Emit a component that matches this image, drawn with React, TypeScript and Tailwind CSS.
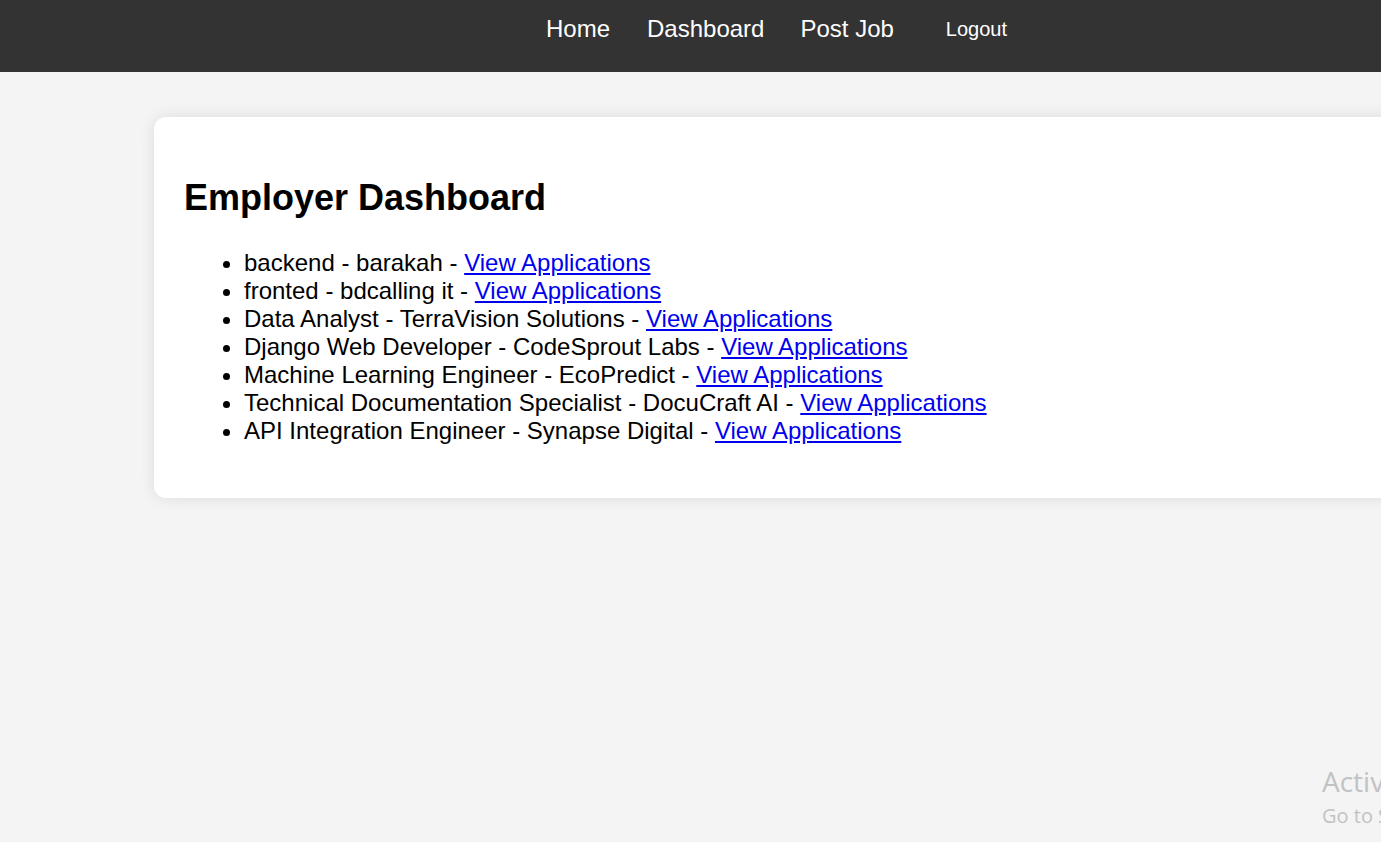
const jobs = [
  ['backend', 'barakah'],
  ['fronted', 'bdcalling it'],
  ['Data Analyst', 'TerraVision Solutions'],
  ['Django Web Developer', 'CodeSprout Labs'],
  ['Machine Learning Engineer', 'EcoPredict'],
  ['Technical Documentation Specialist', 'DocuCraft AI'],
  ['API Integration Engineer', 'Synapse Digital'],
];

export default function App() {
  return (
    <div className="relative h-[842px] w-full overflow-hidden bg-[#f4f4f4] font-['Liberation_Sans',Arial,sans-serif] text-black">
      {/* Top nav */}
      <nav className="flex h-[72px] items-start bg-[#333333] pl-[546px] pt-[17px] text-white">
        <a className="mr-[37px] text-[24px] leading-none">Home</a>
        <a className="mr-[36px] text-[24px] leading-none">Dashboard</a>
        <a className="mr-[52px] text-[24px] leading-none">Post Job</a>
        <button className="mt-[2px] text-[20px] leading-none">Logout</button>
      </nav>

      {/* Dashboard card */}
      <div className="ml-[154px] mt-[45px] w-[1400px] rounded-[12px] bg-white p-[30px] shadow-[0_0_15px_rgba(0,0,0,0.1)]">
        <h2 className="my-[30px] text-[36px] font-bold leading-[41px]">Employer Dashboard</h2>
        <ul className="mb-[23px] mt-[31px] list-disc pl-[60px] text-[24px] leading-[28px]">
          {jobs.map(([title, company]) => (
            <li key={title}>
              {title} - {company} -{' '}
              <a href="#" className="text-[#0000ee] underline">View Applications</a>
            </li>
          ))}
        </ul>
      </div>

      {/* Windows watermark */}
      <div className="absolute left-[1322px] top-[764px] whitespace-nowrap font-['Open_Sans',sans-serif] text-[#c2c2c2]">
        <p className="text-[28px] leading-[34px]">Activate Windows</p>
        <p className="mt-[5px] text-[20px] leading-[26px]">Go to Settings to activate Windows.</p>
      </div>
    </div>
  );
}
